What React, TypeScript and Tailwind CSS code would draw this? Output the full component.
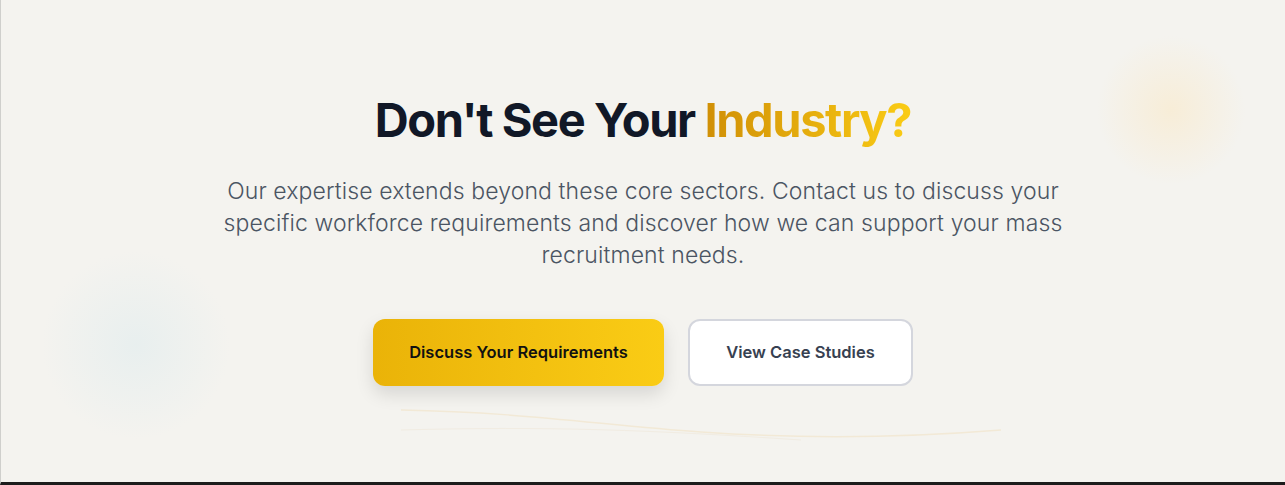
export default function App() {
  return (
    <section className="relative h-[485px] overflow-hidden border-l border-[#cfcfcc] border-b-[3px] border-b-[#1c1c1c] bg-[#f4f3ef] font-['Inter',sans-serif]">
      {/* soft background glows */}
      <div className="pointer-events-none absolute left-[40px] top-[250px] h-[190px] w-[190px] rounded-full bg-[radial-gradient(circle,rgba(224,236,238,0.6)_0%,rgba(244,243,239,0)_70%)]" />
      <div className="pointer-events-none absolute left-[1095px] top-[35px] h-[150px] w-[150px] rounded-full bg-[radial-gradient(circle,rgba(250,232,196,0.55)_0%,rgba(244,243,239,0)_70%)]" />
      <svg className="pointer-events-none absolute left-0 top-[390px]" width="1285" height="60" viewBox="0 0 1285 60" fill="none">
        <path d="M400 20 C 520 22, 600 35, 700 42 S 900 48, 1000 40" stroke="#f2e9d6" strokeWidth="1.5" />
        <path d="M400 40 C 550 36, 650 40, 800 50" stroke="#f1ece2" strokeWidth="1" />
      </svg>

      <div className="relative mx-auto flex max-w-4xl flex-col items-center px-6 pt-[94px] text-center">
        <h2 className="text-[47px] font-bold leading-[1.1] tracking-[-0.03em] text-[#111827]">
          Don't See Your{' '}
          <span className="bg-gradient-to-r from-[#d08f06] to-[#facc15] bg-clip-text text-transparent">
            Industry?
          </span>
        </h2>
        <p className="mt-[29px] max-w-[870px] text-[23px] font-light leading-8 tracking-[0.005em] text-[#4b5563]">
          Our expertise extends beyond these core sectors. Contact us to discuss your specific workforce
          requirements and discover how we can support your mass recruitment needs.
        </p>
        <div className="mt-[48px] flex items-center gap-6">
          <button className="h-[67px] w-[291px] rounded-xl bg-gradient-to-r from-[#eab308] to-[#facc15] text-[16.5px] font-semibold text-[#111] shadow-[0_8px_18px_rgba(0,0,0,0.12)]">
            Discuss Your Requirements
          </button>
          <button className="h-[67px] w-[225px] rounded-xl border-2 border-[#d4d6dd] bg-white text-[16.5px] font-semibold text-[#374151]">
            View Case Studies
          </button>
        </div>
      </div>
    </section>
  );
}
